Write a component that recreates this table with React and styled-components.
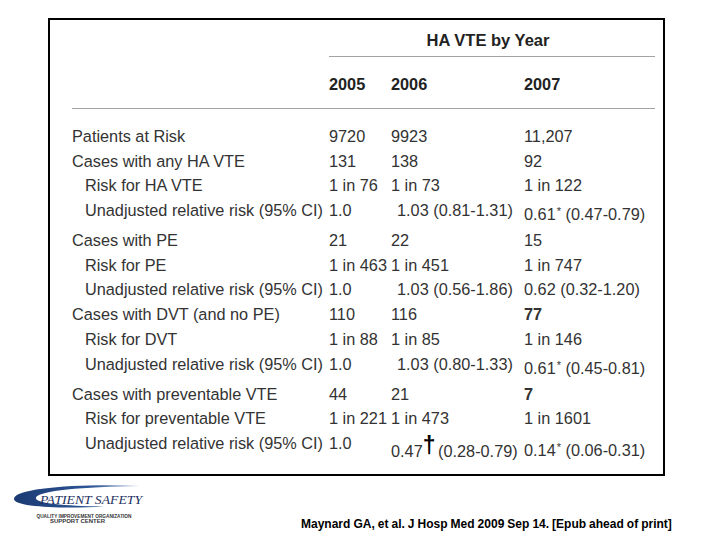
import React from "react";
import styled, { createGlobalStyle } from "styled-components";

const Global = createGlobalStyle`
  html, body {
    margin: 0;
    padding: 0;
    background: #fff;
  }
  * {
    box-sizing: border-box;
  }
`;

const Page = styled.div`
  width: 720px;
  height: 540px;
  padding-top: 18px;
  background: #fff;
  font-family: "Liberation Sans", Arial, sans-serif;
  overflow: hidden;
`;

const Frame = styled.div`
  margin-left: 48px;
  width: 617px;
  height: 458px;
  border: 2px solid #000;
  padding: 10px 8px 0 22px;
`;

const COLS = "257px 62px 133px 1fr";

const TitleRow = styled.div`
  display: grid;
  grid-template-columns: ${COLS};
`;

const Title = styled.div`
  grid-column: 2 / 5;
  text-align: center;
  padding: 0 8px 6px 0;
  border-bottom: 1px solid #a3a3a3;
  font-size: 16.5px;
  line-height: 20px;
  font-weight: bold;
  color: #222;
`;

const YearRow = styled.div`
  display: grid;
  grid-template-columns: ${COLS};
  padding: 16.5px 0 14.5px;
  border-bottom: 1px solid #a3a3a3;
  margin-bottom: 17px;
  font-size: 16.3px;
  line-height: 20px;
  font-weight: bold;
  color: #222;
`;

const Row = styled.div`
  display: grid;
  grid-template-columns: ${COLS};
  align-items: start;
  height: ${(p) => (p.$tall ? 30 : 24.7)}px;
  font-size: 16.3px;
  line-height: 20px;
  color: #333;
  white-space: nowrap;
`;

const Label = styled.span`
  padding-left: ${(p) => (p.$sub ? 13 : 0)}px;
`;

const Cell = styled.span`
  padding-top: ${(p) => p.$drop || 0}px;
  padding-left: ${(p) => p.$indent || 0}px;
  font-weight: ${(p) => (p.$strong ? "bold" : "normal")};
`;

const Star = styled.span`
  font-size: 11px;
  vertical-align: 5px;
  line-height: 0;
  margin-left: 1px;
`;

const Dagger = styled.span`
  font-size: 23px;
  font-weight: bold;
  color: #000;
  line-height: 0;
  vertical-align: 4px;
  margin-right: -2px;
`;

const Footer = styled.div`
  display: flex;
  align-items: flex-start;
`;

const Logo = styled.svg`
  display: block;
  margin: 8px 0 0 12px;
  flex: none;
`;

const Citation = styled.div`
  margin: 41px 0 0 154px;
  font-size: 12px;
  line-height: 14px;
  font-weight: bold;
  word-spacing: -0.3px;
  color: #000;
  white-space: nowrap;
`;

const star = (v, ci) => (
  <>
    {v}
    <Star>*</Star> {ci}
  </>
);

const rows = [
  { label: "Patients at Risk", c: ["9720", "9923", "11,207"] },
  { label: "Cases with any HA VTE", c: ["131", "138", "92"] },
  { label: "Risk for HA VTE", sub: true, c: ["1 in 76", "1 in 73", "1 in 122"] },
  {
    label: "Unadjusted relative risk (95% CI)",
    sub: true,
    tall: true,
    c: ["1.0", "1.03 (0.81-1.31)", star("0.61", "(0.47-0.79)")],
    indent: [0, 6, 0],
    drop: [0, 0, 4],
  },
  { label: "Cases with PE", c: ["21", "22", "15"] },
  { label: "Risk for PE", sub: true, c: ["1 in 463", "1 in 451", "1 in 747"] },
  {
    label: "Unadjusted relative risk (95% CI)",
    sub: true,
    c: ["1.0", "1.03 (0.56-1.86)", "0.62 (0.32-1.20)"],
    indent: [0, 6, 0],
  },
  { label: "Cases with DVT (and no PE)", c: ["110", "116", "77"], strong: 2 },
  { label: "Risk for DVT", sub: true, c: ["1 in 88", "1 in 85", "1 in 146"] },
  {
    label: "Unadjusted relative risk (95% CI)",
    sub: true,
    tall: true,
    c: ["1.0", "1.03 (0.80-1.33)", star("0.61", "(0.45-0.81)")],
    indent: [0, 6, 0],
    drop: [0, 0, 4],
  },
  { label: "Cases with preventable VTE", c: ["44", "21", "7"], strong: 2 },
  { label: "Risk for preventable VTE", sub: true, c: ["1 in 221", "1 in 473", "1 in 1601"] },
  {
    label: "Unadjusted relative risk (95% CI)",
    sub: true,
    c: [
      "1.0",
      <>
        0.47<Dagger>†</Dagger> (0.28-0.79)
      </>,
      star("0.14", "(0.06-0.31)"),
    ],
    drop: [0, 8, 7],
  },
];

const PatientSafetyLogo = () => (
  <Logo width="135" height="48" viewBox="0 0 135 48">
    <defs>
      <linearGradient id="swoosh" x1="0" x2="1" y1="0" y2="0">
        <stop offset="0" stopColor="#1b3a73" />
        <stop offset="0.6" stopColor="#2d5595" />
        <stop offset="1" stopColor="#9fb4d4" />
      </linearGradient>
    </defs>
    <path
      d="M128 2 C68 -0.5, 2 4, 2 15 C2 23, 50 25, 92 22.5 C50 22, 22 19.5, 24 13.5 C27 6.5, 70 3, 128 2 Z"
      fill="url(#swoosh)"
    />
    <text
      x="28"
      y="19.5"
      textLength="102"
      lengthAdjust="spacingAndGlyphs"
      fontFamily="'Liberation Serif', serif"
      fontStyle="italic"
      fontSize="13.5"
      fill="#1d2f5e"
    >
      PATIENT SAFETY
    </text>
    <text
      x="72"
      y="34"
      textAnchor="middle"
      textLength="95"
      lengthAdjust="spacingAndGlyphs"
      fontFamily="'Liberation Sans', sans-serif"
      fontWeight="bold"
      fontSize="4.5"
      fill="#333"
    >
      QUALITY IMPROVEMENT ORGANIZATION
    </text>
    <text
      x="65.5"
      y="39"
      textAnchor="middle"
      textLength="55"
      lengthAdjust="spacingAndGlyphs"
      fontFamily="'Liberation Sans', sans-serif"
      fontWeight="bold"
      fontSize="4.5"
      fill="#333"
    >
      SUPPORT CENTER
    </text>
  </Logo>
);

export default function App() {
  return (
    <Page>
      <Global />
      <Frame>
        <TitleRow>
          <Title>HA VTE by Year</Title>
        </TitleRow>
        <YearRow>
          <span />
          <span>2005</span>
          <span>2006</span>
          <span>2007</span>
        </YearRow>
        {rows.map((r, i) => (
          <Row key={i} $tall={r.tall}>
            <Label $sub={r.sub}>{r.label}</Label>
            {r.c.map((v, j) => (
              <Cell
                key={j}
                $drop={r.drop ? r.drop[j] : 0}
                $indent={r.indent ? r.indent[j] : 0}
                $strong={r.strong === j}
              >
                {v}
              </Cell>
            ))}
          </Row>
        ))}
      </Frame>
      <Footer>
        <PatientSafetyLogo />
        <Citation>Maynard GA, et al. J Hosp Med 2009 Sep 14. [Epub ahead of print]</Citation>
      </Footer>
    </Page>
  );
}
